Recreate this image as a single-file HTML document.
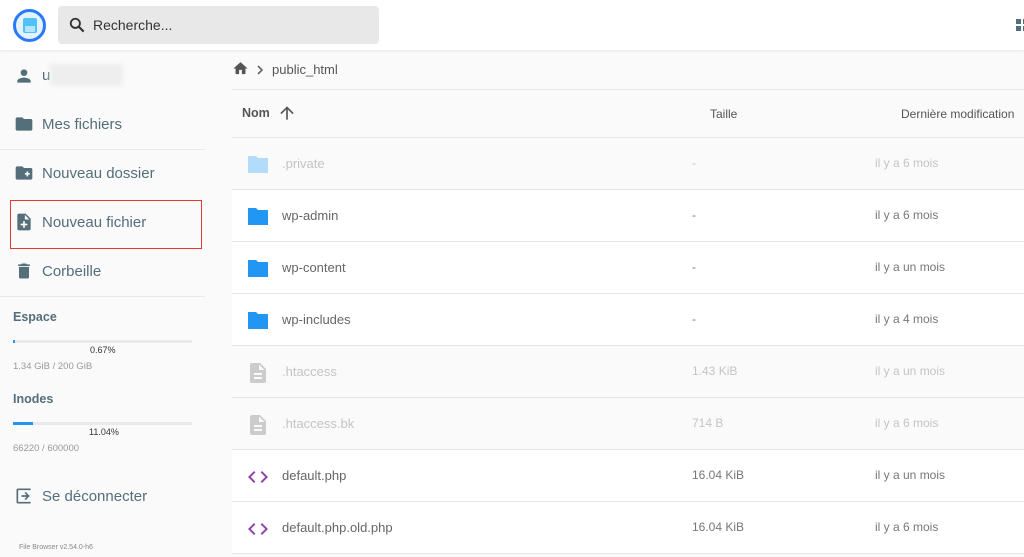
<!DOCTYPE html>
<html><head><meta charset="utf-8"><style>
*{box-sizing:border-box;margin:0;padding:0}
body{width:1024px;height:557px;overflow:hidden;background:#fafafa;font-family:"Liberation Sans",Roboto,sans-serif;position:relative;color:#546e7a}
.hdr{position:absolute;left:0;top:0;width:1024px;height:50px;background:#fff;box-shadow:0 1px 3px rgba(0,0,0,.08);z-index:2}
.logo{position:absolute;left:13px;top:9px;width:33px;height:33px;border-radius:50%;border:3px solid #2979ff;background:#e3f2fd}
.search{position:absolute;left:58px;top:6px;width:321px;height:38px;background:#e8e8e8;border-radius:4px}
.search span{position:absolute;left:35px;top:11px;font-size:14px;color:#333}
.abs{position:absolute}
.nav{position:absolute;left:42px;font-size:15px;color:#546e7a}
.sep{position:absolute;left:0;width:205px;height:1px;background:#e9e9e9}
.row{position:absolute;left:232px;width:792px;height:52px;border-bottom:1px solid #e6e6e6}
.row .n{position:absolute;left:50px;top:18px;font-size:13px;color:#666}
.row .s{position:absolute;left:460px;top:18px;font-size:12px;color:#777}
.row .d{position:absolute;left:643px;top:18px;font-size:12px;color:#777}
.row.h .n,.row.h .s,.row.h .d{color:#c4c4c4}
.row .ic{position:absolute;left:14px;top:15px}
.bar{position:absolute;left:13px;width:179px;height:3px;background:#eaeaea}
</style></head><body>
<div class="hdr">
<div class="logo"><div class="abs" style="left:7px;top:6px;width:14px;height:15px;background:#4fc3f7;border-radius:2px"></div><div class="abs" style="left:9px;top:14px;width:10px;height:6px;background:#b3e5fc"></div></div>
<div class="search"><svg class="abs" style="left:9px;top:9px" width="20" height="20" viewBox="0 0 24 24"><circle cx="10" cy="10" r="5.5" fill="none" stroke="#333" stroke-width="2.2"/><path d="M14 14l6 6" stroke="#333" stroke-width="2.6"/></svg><span>Recherche...</span></div>
<svg class="abs" style="left:1016px;top:19px" width="8" height="12" viewBox="0 0 8 12"><rect x="0" y="0" width="5" height="5" fill="#546e7a"/><rect x="0" y="7" width="5" height="5" fill="#546e7a"/><rect x="7" y="0" width="5" height="5" fill="#546e7a"/><rect x="7" y="7" width="5" height="5" fill="#546e7a"/></svg>
</div>
<div class="abs" style="left:0;top:50px;width:231px;height:507px;background:#fafafa"></div>
<svg class="abs" style="left:14px;top:66px" width="20" height="20" viewBox="0 0 24 24"><path d="M12 12a4 4 0 1 0 0-8 4 4 0 0 0 0 8zm0 2c-2.7 0-8 1.3-8 4v2h16v-2c0-2.7-5.3-4-8-4z" fill="#546e7a"/></svg>
<div class="nav" style="top:67px">u</div><div class="abs" style="left:50px;top:64px;width:73px;height:22px;background:#eee;filter:blur(2px)"></div>
<svg class="abs" style="left:14px;top:114px" width="20" height="20" viewBox="0 0 24 24"><path d="M10 4H4a2 2 0 0 0-2 2v12a2 2 0 0 0 2 2h16a2 2 0 0 0 2-2V8a2 2 0 0 0-2-2h-8z" fill="#546e7a"/></svg>
<div class="nav" style="top:116px">Mes fichiers</div>
<div class="sep" style="top:149px"></div>
<svg class="abs" style="left:14px;top:163px" width="20" height="20" viewBox="0 0 24 24"><path d="M10 4H4a2 2 0 0 0-2 2v12a2 2 0 0 0 2 2h16a2 2 0 0 0 2-2V8a2 2 0 0 0-2-2h-8zm5 6h2v2h2v2h-2v2h-2v-2h-2v-2h2z" fill="#546e7a"/></svg>
<div class="nav" style="top:165px">Nouveau dossier</div>
<svg class="abs" style="left:14px;top:212px" width="20" height="20" viewBox="0 0 24 24"><path d="M14 2H6a2 2 0 0 0-2 2v16a2 2 0 0 0 2 2h12a2 2 0 0 0 2-2V8zm2 14h-3v3h-2v-3H8v-2h3v-3h2v3h3zM13 9V3.5L18.5 9z" fill="#546e7a"/></svg>
<div class="nav" style="top:214px">Nouveau fichier</div>
<div class="abs" style="left:10px;top:200px;width:192px;height:49px;border:1.5px solid #e53935"></div>
<div class="sep" style="top:296px"></div>
<svg class="abs" style="left:14px;top:261px" width="20" height="20" viewBox="0 0 24 24"><path d="M6 19a2 2 0 0 0 2 2h8a2 2 0 0 0 2-2V7H6zM19 4h-3.5l-1-1h-5l-1 1H5v2h14z" fill="#546e7a"/></svg>
<div class="nav" style="top:263px">Corbeille</div>
<div class="abs" style="left:13px;top:310px;font-size:12.5px;font-weight:bold;color:#546e7a">Espace</div>
<div class="bar" style="top:340px"><div style="width:2px;height:3px;background:#2196f3"></div></div>
<div class="abs" style="left:90px;top:345px;font-size:9px;color:#333">0.67%</div>
<div class="abs" style="left:13px;top:361px;font-size:9.5px;color:#999">1.34 GiB / 200 GiB</div>
<div class="abs" style="left:13px;top:392px;font-size:12.5px;font-weight:bold;color:#546e7a">Inodes</div>
<div class="bar" style="top:422px"><div style="width:20px;height:3px;background:#2196f3"></div></div>
<div class="abs" style="left:89px;top:427px;font-size:9px;color:#333">11.04%</div>
<div class="abs" style="left:13px;top:443px;font-size:9.5px;color:#999">66220 / 600000</div>
<svg class="abs" style="left:14px;top:486px" width="20" height="20" viewBox="0 0 24 24"><path d="M10 17l1.4-1.4L8.8 13H15v-2H8.8l2.6-2.6L10 7l-5 5z M4 3h15a2 2 0 0 1 2 2v14a2 2 0 0 1-2 2H4v-2h15V5H4z" fill="#546e7a" transform="translate(24 0) scale(-1 1)"/></svg>
<div class="nav" style="top:488px">Se déconnecter</div>
<div class="abs" style="left:19px;top:544px;font-size:7px;color:#888">File Browser v2.54.0-h6</div>
<svg class="abs" style="left:232px;top:60px" width="17" height="17" viewBox="0 0 24 24"><path d="M10 20v-6h4v6h5v-8h3L12 3 2 12h3v8z" fill="#555"/></svg>
<svg class="abs" style="left:256px;top:64px" width="8" height="12" viewBox="0 0 8 12"><path d="M2 2l4 4-4 4" fill="none" stroke="#666" stroke-width="1.6"/></svg>
<div class="abs" style="left:272px;top:62px;font-size:13px;color:#555">public_html</div>
<div class="abs" style="left:232px;top:89px;width:792px;height:1px;background:#e6e6e6"></div>
<div class="abs" style="left:242px;top:106px;font-size:12.5px;font-weight:bold;color:#555">Nom</div>
<svg class="abs" style="left:277px;top:103px" width="20" height="20" viewBox="0 0 24 24"><path d="M4 12l1.4 1.4L11 7.8V20h2V7.8l5.6 5.6L20 12l-8-8z" fill="#555"/></svg>
<div class="abs" style="left:710px;top:107px;font-size:12px;color:#555">Taille</div>
<div class="abs" style="left:901px;top:107px;font-size:12px;color:#555">Dernière modification</div>
<div class="abs" style="left:232px;top:137px;width:792px;height:1px;background:#e6e6e6"></div>
<div class="row h" style="top:138px;background:#fafafa"><svg class="ic" width="24" height="22" viewBox="0 0 24 22"><path d="M2 3h8l2 2h10v15H2z" fill="#b3dbfb"/></svg><span class="n">.private</span><span class="s">-</span><span class="d">il y a 6 mois</span></div>
<div class="row" style="top:190px;background:#fff"><svg class="ic" width="24" height="22" viewBox="0 0 24 22"><path d="M2 3h8l2 2h10v15H2z" fill="#2196f3"/></svg><span class="n">wp-admin</span><span class="s">-</span><span class="d">il y a 6 mois</span></div>
<div class="row" style="top:242px;background:#fff"><svg class="ic" width="24" height="22" viewBox="0 0 24 22"><path d="M2 3h8l2 2h10v15H2z" fill="#2196f3"/></svg><span class="n">wp-content</span><span class="s">-</span><span class="d">il y a un mois</span></div>
<div class="row" style="top:294px;background:#fff"><svg class="ic" width="24" height="22" viewBox="0 0 24 22"><path d="M2 3h8l2 2h10v15H2z" fill="#2196f3"/></svg><span class="n">wp-includes</span><span class="s">-</span><span class="d">il y a 4 mois</span></div>
<div class="row h" style="top:346px;background:#fafafa"><svg class="ic" width="24" height="24" viewBox="0 0 24 24"><path d="M14 2H6a2 2 0 0 0-2 2v16a2 2 0 0 0 2 2h12a2 2 0 0 0 2-2V8zm2 16H8v-2h8zm0-4H8v-2h8zm-3-5V3.5L18.5 9z" fill="#ccc"/></svg><span class="n">.htaccess</span><span class="s">1.43 KiB</span><span class="d">il y a un mois</span></div>
<div class="row h" style="top:398px;background:#fafafa"><svg class="ic" width="24" height="24" viewBox="0 0 24 24"><path d="M14 2H6a2 2 0 0 0-2 2v16a2 2 0 0 0 2 2h12a2 2 0 0 0 2-2V8zm2 16H8v-2h8zm0-4H8v-2h8zm-3-5V3.5L18.5 9z" fill="#ccc"/></svg><span class="n">.htaccess.bk</span><span class="s">714 B</span><span class="d">il y a 6 mois</span></div>
<div class="row" style="top:450px;background:#fff"><svg class="ic" width="24" height="24" viewBox="0 0 24 24"><path d="M9.4 16.6L4.8 12l4.6-4.6L8 6l-6 6 6 6zm5.2 0l4.6-4.6-4.6-4.6L16 6l6 6-6 6z" fill="#8e44ad"/></svg><span class="n">default.php</span><span class="s">16.04 KiB</span><span class="d">il y a un mois</span></div>
<div class="row" style="top:502px;background:#fff"><svg class="ic" width="24" height="24" viewBox="0 0 24 24"><path d="M9.4 16.6L4.8 12l4.6-4.6L8 6l-6 6 6 6zm5.2 0l4.6-4.6-4.6-4.6L16 6l6 6-6 6z" fill="#8e44ad"/></svg><span class="n">default.php.old.php</span><span class="s">16.04 KiB</span><span class="d">il y a 6 mois</span></div>
</body></html>
